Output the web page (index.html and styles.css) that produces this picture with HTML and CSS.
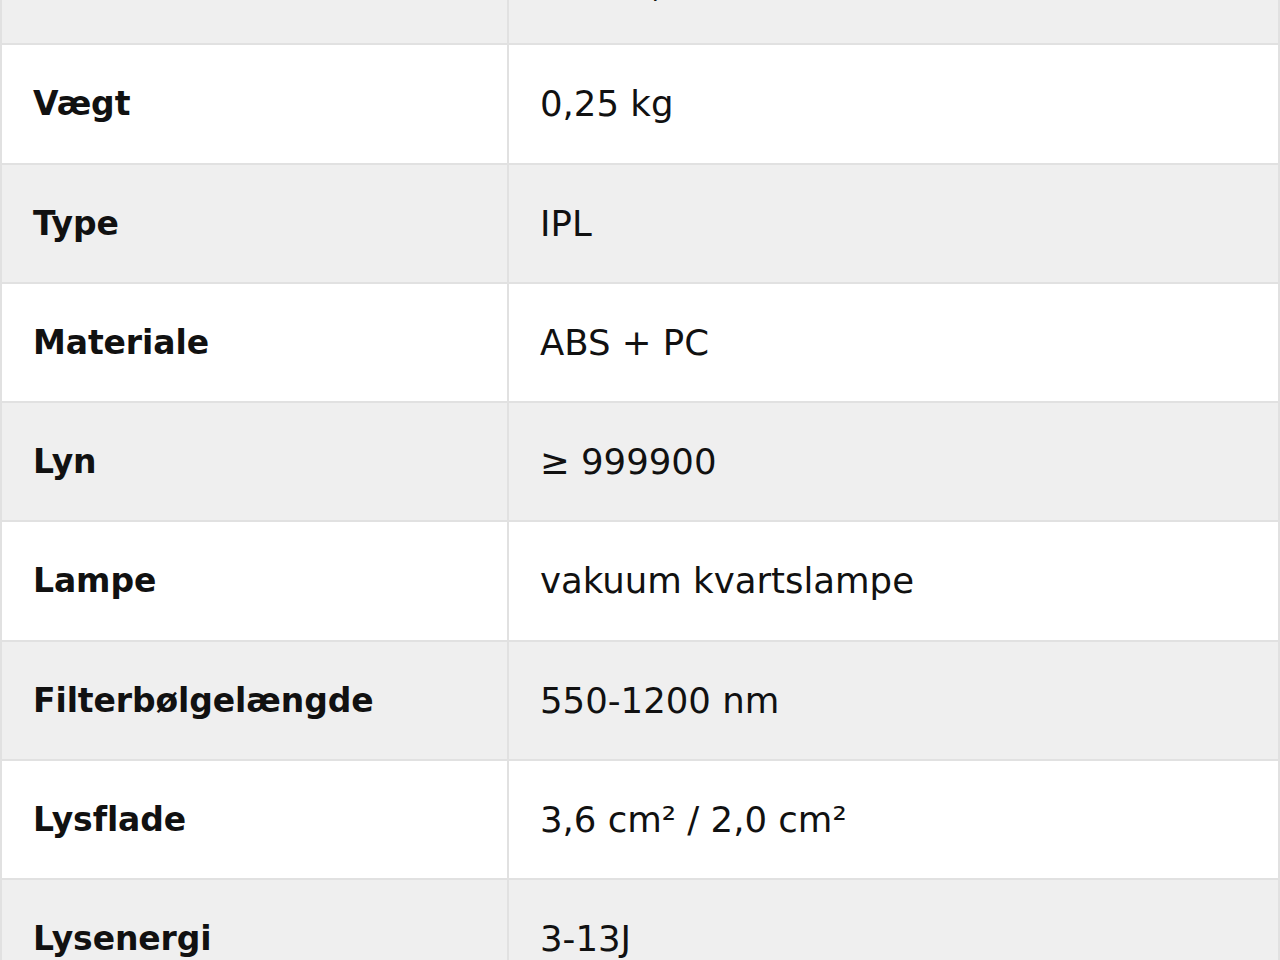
FILE: index.html
```html
<!DOCTYPE html>
<html lang="da">
<head>
<meta charset="utf-8">
<title>Specifikationer</title>
<link rel="stylesheet" href="styles.css">
</head>
<body>
<table class="specs">
  <tbody>
    <tr><th>Størrelse</th><td>15 x 6,5 x 4 cm</td></tr>
    <tr><th>Vægt</th><td>0,25 kg</td></tr>
    <tr><th>Type</th><td>IPL</td></tr>
    <tr><th>Materiale</th><td>ABS + PC</td></tr>
    <tr><th>Lyn</th><td>≥ 999900</td></tr>
    <tr><th>Lampe</th><td>vakuum kvartslampe</td></tr>
    <tr><th>Filterbølgelængde</th><td>550-1200 nm</td></tr>
    <tr><th>Lysflade</th><td>3,6 cm² / 2,0 cm²</td></tr>
    <tr><th>Lysenergi</th><td>3-13J</td></tr>
  </tbody>
</table>
</body>
</html>
```
FILE: styles.css
```css
html, body {
  margin: 0;
  padding: 0;
  background: #ffffff;
  overflow: hidden;
}

.specs {
  width: 1280px;
  margin-top: -76px;
  border-collapse: collapse;
  table-layout: fixed;
  color: #111111;
  font-family: "DejaVu Sans", sans-serif;
}

.specs tr:nth-child(odd) {
  background: #efefef;
}

.specs tr:nth-child(even) {
  background: #ffffff;
}

.specs th,
.specs td {
  height: 117.25px;
  padding: 0 0 0 31px;
  border: 2px solid #e1e1e1;
  text-align: left;
  vertical-align: middle;
  white-space: nowrap;
  box-sizing: content-box;
}

.specs th {
  width: 474px;
  font-size: 33px;
  font-weight: 700;
  letter-spacing: -0.1px;
}

.specs td {
  font-size: 35.5px;
  font-weight: 400;
}
```
